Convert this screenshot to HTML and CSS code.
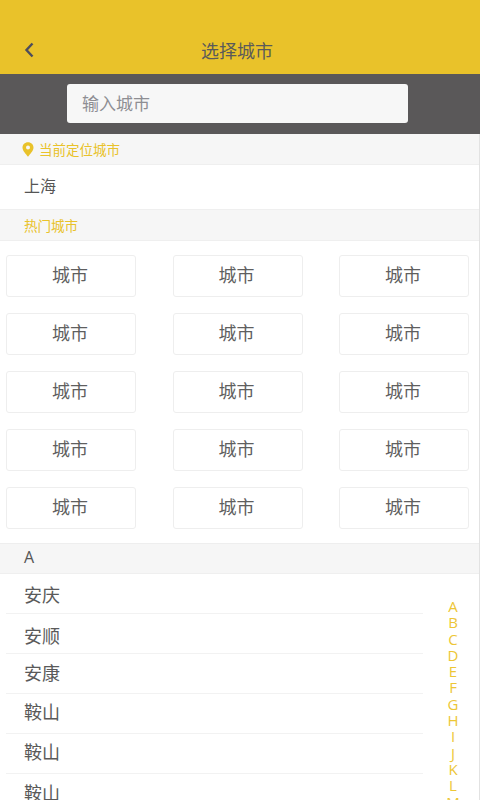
FILE: index.html
```
<!DOCTYPE html>
<html lang="zh">
<head>
<meta charset="utf-8">
<title>选择城市</title>
<link rel="stylesheet" href="styles.css">
</head>
<body>
<div class="page">
  <header class="header">
    <svg class="back" width="12" height="18" viewBox="0 0 12 18"><path d="M9.500 2.500 3.500 9l6 6.500" fill="none" stroke="#4d4d5c" stroke-width="2.400"/></svg>
    <h1 class="title">选择城市</h1>
  </header>
  <div class="search"><div class="input">输入城市</div></div>
  <div class="content">
    <div class="section located">
      <svg class="pin" width="12" height="15" viewBox="0 0 12 15"><path fill-rule="evenodd" d="M6 .3C2.800.3.500 2.600.500 5.500.500 8.800 3.900 11.900 6 14.800 8.100 11.900 11.500 8.800 11.500 5.500 11.500 2.600 9.200.3 6 .3Zm0 3.200a2 2 0 1 1 0 4 2 2 0 0 1 0-4Z" fill="#e9c22a"/></svg>
      <span>当前定位城市</span>
    </div>
    <div class="current">上海</div>
    <div class="section hot"><span>热门城市</span></div>
    <div class="grid">
      <div class="city">城市</div><div class="city">城市</div><div class="city">城市</div>
      <div class="city">城市</div><div class="city">城市</div><div class="city">城市</div>
      <div class="city">城市</div><div class="city">城市</div><div class="city">城市</div>
      <div class="city">城市</div><div class="city">城市</div><div class="city">城市</div>
      <div class="city">城市</div><div class="city">城市</div><div class="city">城市</div>
    </div>
    <div class="letter">A</div>
    <ul class="list">
      <li>安庆</li><li>安顺</li><li>安康</li><li>鞍山</li><li>鞍山</li><li>鞍山</li>
    </ul>
  </div>
  <div class="index">
    <span>A</span><span>B</span><span>C</span><span>D</span><span>E</span><span>F</span><span>G</span><span>H</span><span>I</span><span>J</span><span>K</span><span>L</span><span>M</span>
  </div>
</div>
</body>
</html>
```
FILE: styles.css
```
* { box-sizing: border-box; margin: 0; padding: 0; }
html, body { height: 100%; overflow: hidden; }
body {
  background: #fff;
  font-family: "Noto Sans CJK SC", "Noto Sans", sans-serif;
  color: #5a5a5a;
}
.page { position: relative; width: 480px; height: 800px; overflow: hidden; }
.header {
  height: 74px;
  background: #e9c22a;
  position: relative;
  display: flex;
  align-items: flex-end;
  justify-content: center;
  padding-bottom: 10px;
}
.back { position: absolute; left: 23px; top: 41px; }
.title { font-size: 18px; font-weight: 400; line-height: 28px; color: #5a5a5a; margin-left: -6px; }
.search {
  height: 60px;
  background: #5a5859;
  padding: 10px 72px 11px 67px;
}
.input {
  height: 39px;
  background: #f7f7f7;
  border-radius: 3px;
  padding-left: 15px;
  font-size: 17px;
  line-height: 37px;
  color: #8e8e93;
}
.content { height: 666px; border-right: 1px solid #e2e2e2; }
.section {
  height: 31px;
  background: #f6f6f6;
  border-bottom: 1px solid #efefef;
  display: flex;
  align-items: center;
  font-size: 13.500px;
  color: #e9c22a;
  padding-left: 24px;
}
.located { padding-left: 22px; }
.pin { margin-right: 5px; }
.current {
  height: 45px;
  border-bottom: 1px solid #efefef;
  padding-left: 24px;
  font-size: 16px;
  line-height: 40px;
  color: #555;
}
.grid {
  display: grid;
  grid-template-columns: repeat(3, 130px);
  grid-auto-rows: 42px;
  justify-content: space-between;
  row-gap: 16px;
  padding: 14px 10px 14px 6px;
}
.city {
  border: 1px solid #eeeeee;
  border-radius: 3px;
  padding-right: 2px;
  text-align: center;
  font-size: 18px;
  line-height: 36px;
  color: #5f5f5f;
}
.letter {
  height: 31px;
  background: #f6f6f6;
  border-top: 1px solid #eeeeee;
  border-bottom: 1px solid #efefef;
  padding-left: 24px;
  font-family: "Open Sans", sans-serif;
  font-size: 16px;
  line-height: 27px;
  color: #555;
}
.list { list-style: none; margin-left: 6px; width: 417px; }
.list li {
  height: 40px;
  border-bottom: 1px solid #f2f2f2;
  padding-left: 18px;
  font-size: 18px;
  line-height: 35px;
  color: #5a5a5a;
}
.list li:first-child { line-height: 41px; }
.list li:nth-child(2) { line-height: 42px; }
.list li:nth-child(3) { line-height: 36px; }
.list li:last-child { line-height: 37px; }
.index {
  position: absolute;
  left: 443px;
  top: 598px;
  width: 20px;
  display: flex;
  flex-direction: column;
  align-items: center;
  font-family: "Open Sans", sans-serif;
  font-size: 15px;
  line-height: 16.300px;
  color: #edc636;
}
```
